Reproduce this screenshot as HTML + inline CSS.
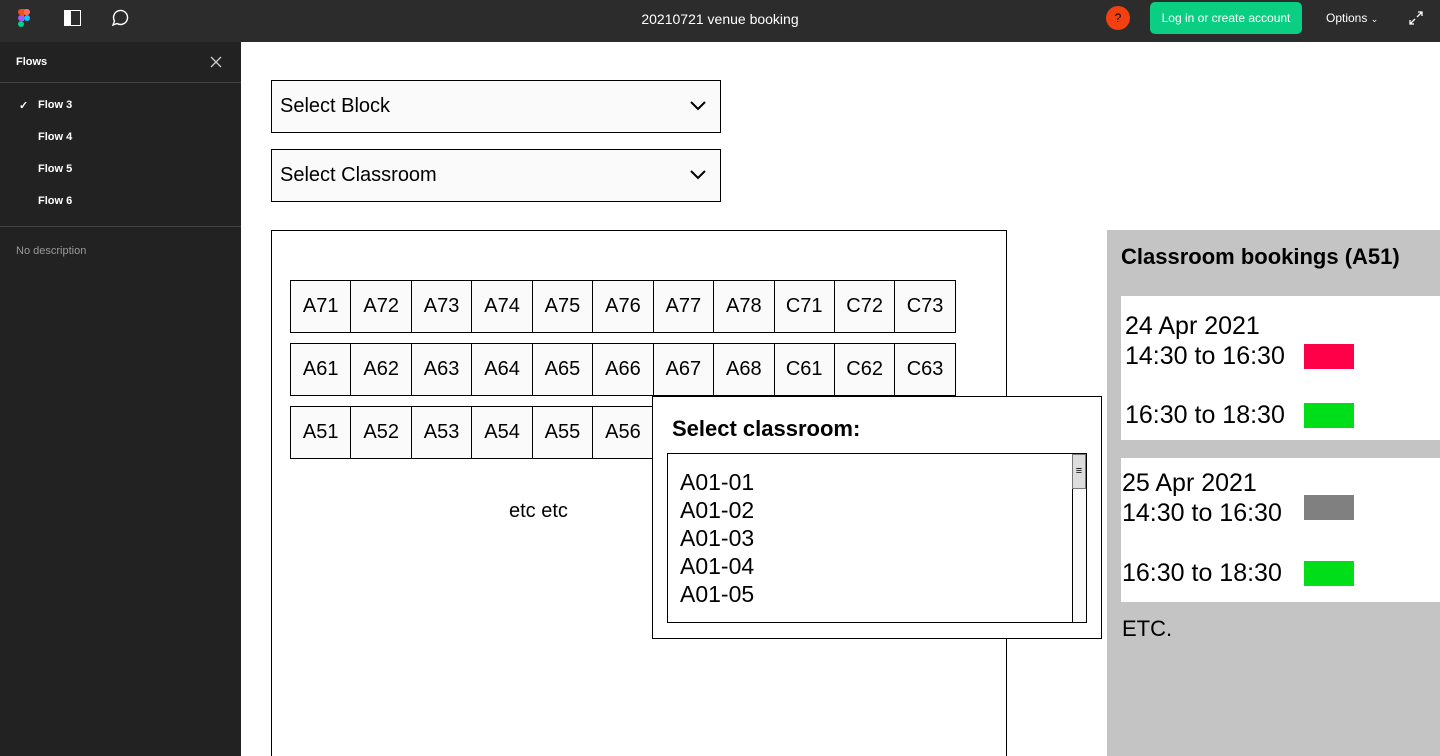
<!DOCTYPE html>
<html><head><meta charset="utf-8"><style>
*{box-sizing:border-box;margin:0;padding:0}
html,body{width:1440px;height:756px;overflow:hidden}
body{background:#fff;font-family:"Liberation Sans",sans-serif;position:relative}
.a{position:absolute}
.top{left:0;top:0;width:1440px;height:42px;background:#2c2c2c}
.side{left:0;top:42px;width:241px;height:714px;background:#222}
.w{color:#fff;font-size:11px;font-weight:bold}
.sel{background:#fafafa;border:1px solid #000;font-size:20px;line-height:51px;padding-left:8px;color:#000}
.cell{width:61.45px;height:53px;border:1px solid #000;background:#fafafa;font-size:20px;line-height:51px;text-align:center;margin-right:-1px;flex:none}
.row{display:flex}
.t{font-size:25px;color:#000;line-height:30px}
.sw{width:50px;height:25px}
</style></head><body>
<div class="a top"></div>
<svg class="a" style="left:18px;top:9px" width="12" height="18" viewBox="0 0 12 18"><rect x="0" y="0" width="6" height="6" rx="3" fill="#f24e1e"/><rect x="3" y="0" width="6" height="6" fill="#f24e1e"/><rect x="6" y="0" width="6" height="6" rx="3" fill="#ff7262"/><rect x="0" y="6" width="6" height="6" rx="3" fill="#a259ff"/><rect x="3" y="6" width="3" height="6" fill="#a259ff"/><circle cx="9" cy="9" r="3" fill="#1abcfe"/><rect x="0" y="12" width="6" height="6" rx="3" fill="#0acf83"/></svg>
<div class="a" style="left:64px;top:10px;width:17px;height:16px;border:1.5px solid #fff"><div style="width:6px;height:100%;background:#fff"></div></div>
<svg class="a" style="left:110px;top:9px" width="19" height="18" viewBox="0 0 19 18"><path d="M3 16 L4.5 12 A7 7 0 1 1 7 14.5 Z" fill="none" stroke="#fff" stroke-width="1.4"/></svg>
<div class="a" style="left:0;width:1440px;top:11px;text-align:center;color:#fff;font-size:14px">20210721 venue booking</div>
<div class="a" style="left:1106px;top:6px;width:24px;height:24px;border-radius:50%;background:#f24011;text-align:center;font-size:12px;line-height:24px;color:#000">?</div>
<div class="a" style="left:1150px;top:2px;width:152px;height:32px;border-radius:5px;background:#0acf83;color:#fff;font-size:12px;text-align:center;line-height:32px">Log in or create account</div>
<div class="a" style="left:1326px;top:11px;color:#fff;font-size:12px">Options <span style="font-size:9px">&#8964;</span></div>
<svg class="a" style="left:1408px;top:10px" width="16" height="16" viewBox="0 0 16 16" fill="none" stroke="#fff" stroke-width="1.3"><path d="M9 7 L14 2 M10 2 H14 V6 M7 9 L2 14 M2 10 V14 H6"/></svg>
<div class="a side"></div>
<div class="a w" style="left:16px;top:56px">Flows</div>
<svg class="a" style="left:210px;top:56px" width="12" height="12" stroke="#ccc" stroke-width="1.3"><path d="M1 1 L11 11 M11 1 L1 11"/></svg>
<div class="a" style="left:0;top:82px;width:241px;height:1px;background:#444"></div>
<div class="a w" style="left:19px;top:99px">✓</div>
<div class="a w" style="left:38px;top:99px">Flow 3</div>
<div class="a w" style="left:38px;top:131px">Flow 4</div>
<div class="a w" style="left:38px;top:163px">Flow 5</div>
<div class="a w" style="left:38px;top:195px">Flow 6</div>
<div class="a" style="left:0;top:226px;width:241px;height:1px;background:#444"></div>
<div class="a" style="left:16px;top:245px;color:#999;font-size:11px">No description</div>

<div class="a sel" style="left:271px;top:80px;width:450px;height:53px">Select Block</div>
<div class="a sel" style="left:271px;top:149px;width:450px;height:53px">Select Classroom</div>
<svg class="a" style="left:690px;top:101px" width="16" height="10"><path d="M1 1 L8 8 L15 1" fill="none" stroke="#000" stroke-width="2"/></svg>
<svg class="a" style="left:690px;top:170px" width="16" height="10"><path d="M1 1 L8 8 L15 1" fill="none" stroke="#000" stroke-width="2"/></svg>

<div class="a" style="left:271px;top:230px;width:736px;height:526px;border:1px solid #000;border-bottom:none"></div>
<div class="a row" style="left:290px;top:280px"><div class="cell">A71</div><div class="cell">A72</div><div class="cell">A73</div><div class="cell">A74</div><div class="cell">A75</div><div class="cell">A76</div><div class="cell">A77</div><div class="cell">A78</div><div class="cell">C71</div><div class="cell">C72</div><div class="cell">C73</div></div>
<div class="a row" style="left:290px;top:343px"><div class="cell">A61</div><div class="cell">A62</div><div class="cell">A63</div><div class="cell">A64</div><div class="cell">A65</div><div class="cell">A66</div><div class="cell">A67</div><div class="cell">A68</div><div class="cell">C61</div><div class="cell">C62</div><div class="cell">C63</div></div>
<div class="a row" style="left:290px;top:406px"><div class="cell">A51</div><div class="cell">A52</div><div class="cell">A53</div><div class="cell">A54</div><div class="cell">A55</div><div class="cell">A56</div></div>
<div class="a" style="left:509px;top:500px;font-size:20px">etc etc</div>

<div class="a" style="left:652px;top:396px;width:450px;height:243px;border:1px solid #000;background:#fff"></div>
<div class="a" style="left:672px;top:416px;font-size:22px;font-weight:bold">Select classroom:</div>
<div class="a" style="left:667px;top:453px;width:420px;height:170px;border:1px solid #000;background:#fff;padding:14px 0 0 12px;font-size:23px;line-height:28px">A01-01<br>A01-02<br>A01-03<br>A01-04<br>A01-05</div>
<div class="a" style="left:1072px;top:454px;width:14px;height:168px;border-left:1px solid #000;background:#fafafa"></div>
<div class="a" style="left:1072px;top:454px;width:14px;height:35px;border:1px solid #777;background:#ddd;font-size:11px;text-align:center;line-height:32px">≡</div>

<div class="a" style="left:1107px;top:230px;width:333px;height:526px;background:#c4c4c4"></div>
<div class="a" style="left:1121px;top:244px;font-size:22px;font-weight:bold">Classroom bookings (A51)</div>
<div class="a" style="left:1121px;top:296px;width:319px;height:144px;background:#fff"></div>
<div class="a" style="left:1121px;top:458px;width:319px;height:144px;background:#fff"></div>
<div class="a t" style="left:1125px;top:311px">24 Apr 2021<br>14:30 to 16:30</div>
<div class="a t" style="left:1125px;top:400px">16:30 to 18:30</div>
<div class="a t" style="left:1122px;top:468px">25 Apr 2021<br>14:30 to 16:30</div>
<div class="a t" style="left:1122px;top:558px">16:30 to 18:30</div>
<div class="a sw" style="left:1304px;top:344px;background:#ff0048"></div>
<div class="a sw" style="left:1304px;top:403px;background:#00dd19"></div>
<div class="a sw" style="left:1304px;top:495px;background:#808080"></div>
<div class="a sw" style="left:1304px;top:561px;background:#00dd19"></div>
<div class="a" style="left:1122px;top:616px;font-size:22px">ETC.</div>
</body></html>
